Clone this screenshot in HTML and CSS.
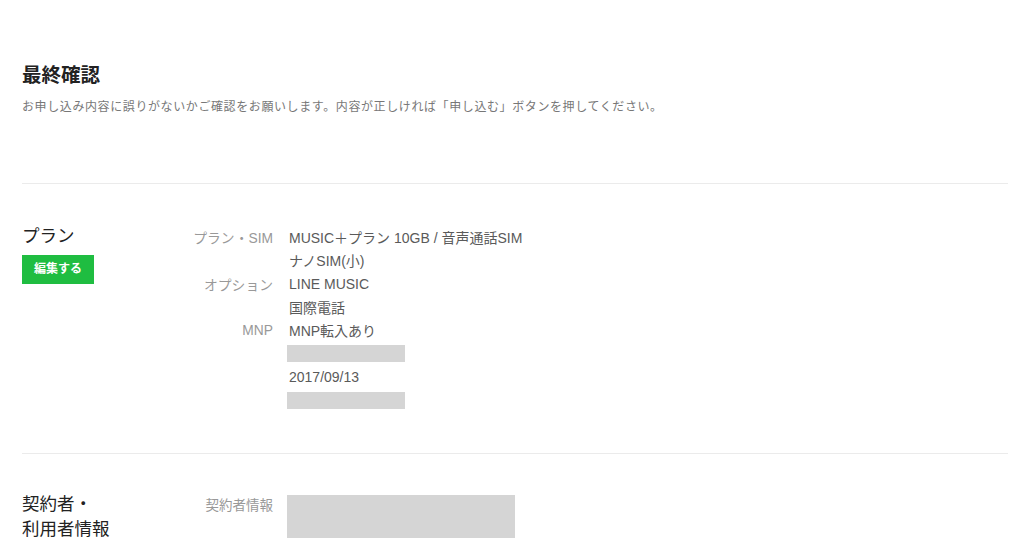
FILE: index.html
```html
<!DOCTYPE html>
<html lang="ja">
<head>
<meta charset="utf-8">
<link rel="stylesheet" href="styles.css">
</head>
<body>
<div class="page">
  <header class="intro">
    <h1 class="title">最終確認</h1>
    <p class="lead">お申し込み内容に誤りがないかご確認をお願いします。内容が正しければ「申し込む」ボタンを押してください。</p>
  </header>

  <section class="section section-plan">
    <div class="side">
      <h2 class="side-title">プラン</h2>
      <a class="edit-btn">編集する</a>
    </div>
    <dl class="details">
      <div class="row"><dt>プラン・SIM</dt><dd>MUSIC＋プラン 10GB / 音声通話SIM</dd></div>
      <div class="row"><dt></dt><dd>ナノSIM(小)</dd></div>
      <div class="row"><dt>オプション</dt><dd>LINE MUSIC</dd></div>
      <div class="row"><dt></dt><dd>国際電話</dd></div>
      <div class="row"><dt>MNP</dt><dd>MNP転入あり</dd></div>
      <div class="row"><dt></dt><dd><span class="mask mask-short"></span></dd></div>
      <div class="row"><dt></dt><dd>2017/09/13</dd></div>
      <div class="row"><dt></dt><dd><span class="mask mask-short"></span></dd></div>
    </dl>
  </section>

  <section class="section section-user">
    <div class="side">
      <h2 class="side-title">契約者・<br>利用者情報</h2>
    </div>
    <dl class="details details-user">
      <div class="row row-top"><dt>契約者情報</dt><dd><span class="mask mask-block"></span></dd></div>
    </dl>
  </section>
</div>
</body>
</html>
```

FILE: styles.css
```css
* { box-sizing: border-box; }
html, body { margin: 0; padding: 0; background: #fff; }
body {
  font-family: "Liberation Sans", "Noto Sans CJK JP", sans-serif;
  color: #555;
  overflow: hidden;
}
.page { padding: 0 16px 0 22px; }

.intro { padding-top: 61px; padding-bottom: 66px; }
.title {
  margin: 0;
  font-size: 19.5px;
  line-height: 28px;
  font-weight: bold;
  color: #222;
}
.lead {
  margin: 8px 0 0;
  font-size: 12px;
  line-height: 20px;
  letter-spacing: 0.6px;
  color: #777;
}

.section {
  display: flex;
  border-top: 1px solid #ebebeb;
}
.section-plan { padding-top: 40px; padding-bottom: 41px; }
.section-user { padding-top: 38px; }

.side { width: 150px; flex: none; }
.side-title {
  margin: 0;
  font-size: 17.5px;
  line-height: 25px;
  font-weight: normal;
  color: #222;
}
.edit-btn {
  display: block;
  margin-top: 6px;
  width: 72px;
  height: 29px;
  line-height: 29px;
  text-align: center;
  background: #1fbd41;
  color: #fff;
  font-size: 12px;
  font-weight: bold;
}

.details { margin: 1.5px 0 0; }
.details-user { margin-top: 3.5px; }
.row { display: flex; align-items: center; height: 23.3px; }
.row dt {
  width: 101px;
  flex: none;
  text-align: right;
  font-size: 13.8px;
  color: #999;
}
.row dd {
  margin: 0 0 0 16px;
  font-size: 14px;
  color: #5a5a5a;
  display: flex;
  align-items: center;
  white-space: nowrap;
}
.row-top { align-items: flex-start; height: auto; }
.row-top dt { line-height: 22px; font-size: 13.5px; }

.mask { display: block; background: #d5d5d5; }
.mask-short { width: 118px; height: 17px; margin-left: -2px; }
.mask-block { width: 228px; height: 60px; margin-left: -2px; }
```
